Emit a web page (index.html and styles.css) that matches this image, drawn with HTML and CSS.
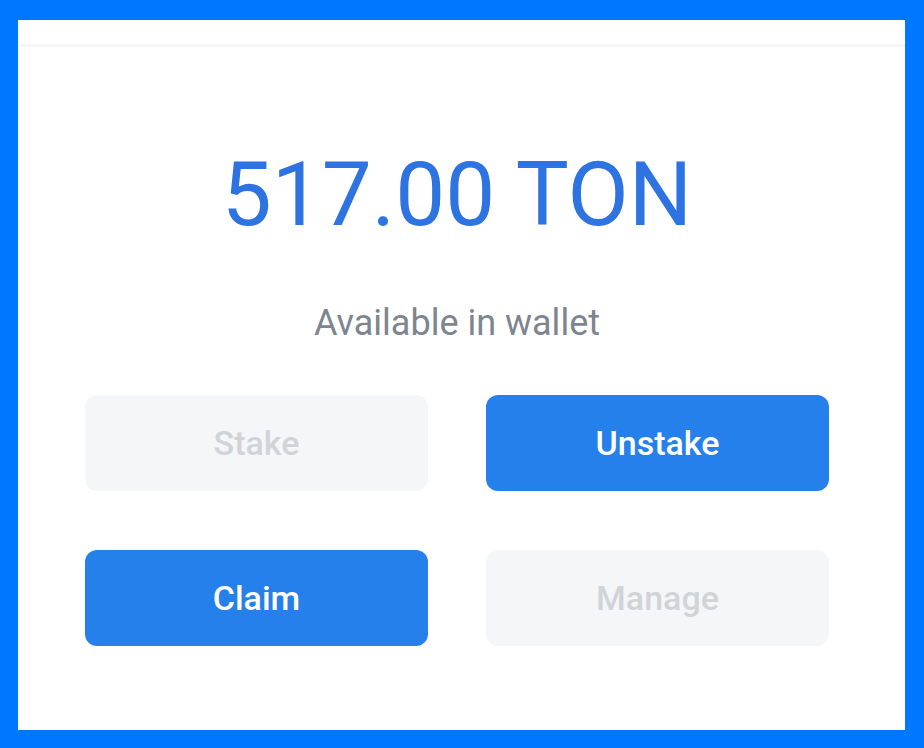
FILE: index.html
```html
<!DOCTYPE html>
<html>
<head>
<meta charset="utf-8">
<link rel="stylesheet" href="styles.css">
</head>
<body>
<div class="card">
  <div class="topbar"></div>
  <div class="content">
    <div class="amount">517.00 TON</div>
    <div class="label">Available in wallet</div>
    <div class="actions">
      <button class="btn btn-disabled">Stake</button>
      <button class="btn btn-primary">Unstake</button>
      <button class="btn btn-primary">Claim</button>
      <button class="btn btn-disabled">Manage</button>
    </div>
  </div>
</div>
</body>
</html>
```
FILE: styles.css
```css
html, body {
  margin: 0;
  height: 100%;
}
body {
  background: #0077ff;
  padding: 20px 19px 18px 18px;
  box-sizing: border-box;
  font-family: Roboto, "Liberation Sans", sans-serif;
}
.card {
  background: #ffffff;
  height: 710px;
  box-sizing: border-box;
}
.topbar {
  height: 24px;
  border-bottom: 3px solid #f7f7f8;
}
.content {
  padding: 0 76px 0 67px;
  display: flex;
  flex-direction: column;
  align-items: center;
}
.amount {
  margin-top: 98px;
  font-size: 89px;
  line-height: 100px;
  color: #2d73e2;
  font-weight: 400;
}
.label {
  margin-top: 58px;
  font-size: 36px;
  line-height: 40px;
  color: #7d858f;
}
.actions {
  margin-top: 52px;
  display: grid;
  grid-template-columns: 343px 343px;
  column-gap: 58px;
  row-gap: 59px;
}
.btn {
  height: 96px;
  border: none;
  border-radius: 12px;
  font-family: inherit;
  font-size: 34px;
  font-weight: 500;
  padding: 0;
}
.btn-primary {
  background: #2680eb;
  color: #ffffff;
}
.btn-disabled {
  background: #f5f6f8;
  color: #d0d4d9;
}
```
